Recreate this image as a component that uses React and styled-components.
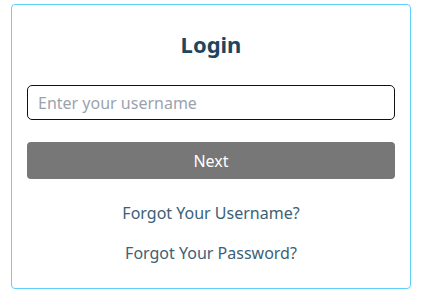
import styled, { createGlobalStyle } from "styled-components";

const GlobalStyle = createGlobalStyle`
  body {
    margin: 0;
    background: #fff;
    font-family: "Noto Sans", "Open Sans", sans-serif;
  }
`;

const Page = styled.main`
  display: flex;
  justify-content: center;
  padding-top: 4px;
`;

const Card = styled.section`
  width: 400px;
  box-sizing: border-box;
  border: 1px solid #5fd0fb;
  border-radius: 4px;
  padding: 24px 15px 24px;
  display: flex;
  flex-direction: column;
`;

const Title = styled.h1`
  margin: 0 0 26px;
  text-align: center;
  font-size: 22px;
  line-height: 30px;
  font-weight: 700;
  color: #1d4560;
`;

const Input = styled.input`
  box-sizing: border-box;
  width: 100%;
  height: 35px;
  border: 1px solid #111;
  border-radius: 5px;
  padding: 0 10px;
  font-family: inherit;
  font-size: 16px;
  color: #333;
  outline: none;
  &::placeholder {
    color: #9aa3ad;
  }
`;

const Button = styled.button`
  margin-top: 22px;
  height: 37px;
  border: none;
  border-radius: 4px;
  background: #777777;
  color: #fff;
  font-family: inherit;
  font-size: 16px;
`;

const Links = styled.div`
  margin-top: 23px;
  display: flex;
  flex-direction: column;
  align-items: center;
  gap: 18px;
`;

const TextLink = styled.a`
  font-size: 16px;
  line-height: 22px;
  color: #3b6176;
  text-decoration: none;
`;

const App = () => {
  return (
    <Page>
      <GlobalStyle />
      <Card>
        <Title>Login</Title>
        <Input placeholder="Enter your username" />
        <Button type="button">Next</Button>
        <Links>
          <TextLink href="#">Forgot Your Username?</TextLink>
          <TextLink href="#">Forgot Your Password?</TextLink>
        </Links>
      </Card>
    </Page>
  );
};

export default App;
